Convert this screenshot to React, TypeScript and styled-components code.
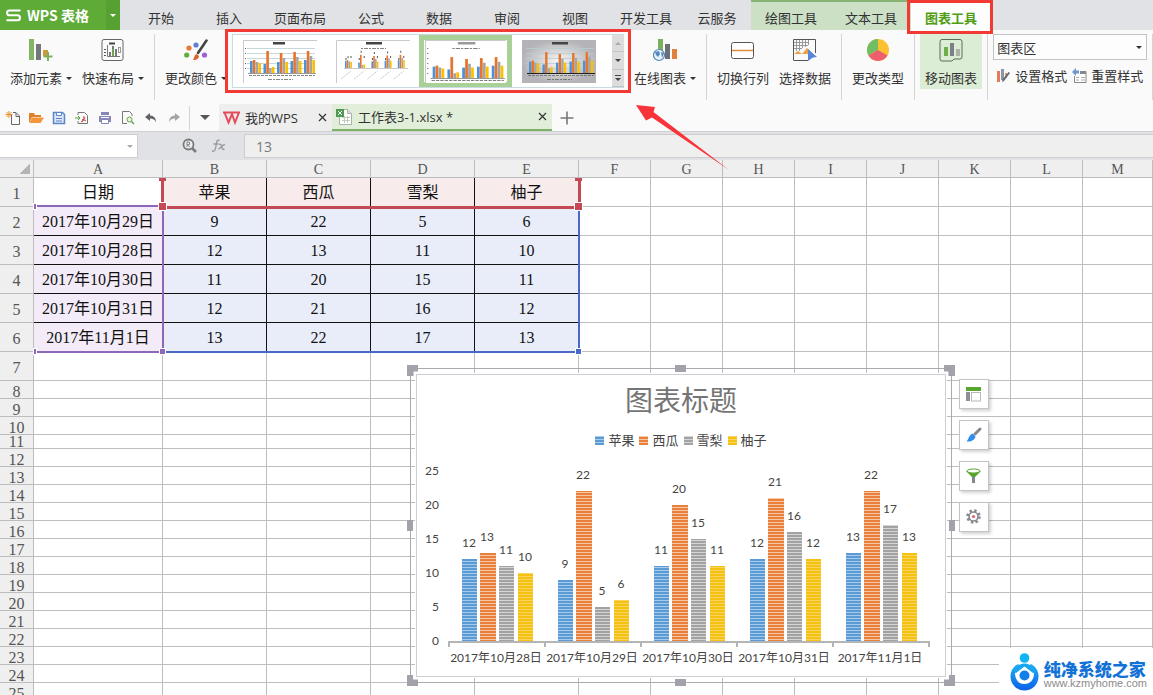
import React from "react";
import styled, { createGlobalStyle, css } from "styled-components";

const sans = `"Open Sans", "Noto Sans CJK SC", sans-serif`;
const ui = `"Noto Sans CJK SC", "Noto Sans", sans-serif`;
const serif = `"Liberation Serif", "Noto Sans CJK SC", serif`;
const calibri = `Lato, "Noto Sans CJK SC", sans-serif`;
const RED = "#f23a35";

const Global = createGlobalStyle`
  * { box-sizing: border-box; }
  body { margin: 0; background: #fff; font-family: ${ui}; font-size: 13px; color: #333; }
  button, input, select { font: inherit; color: inherit; margin: 0; padding: 0; border: 0; background: none; border-radius: 0; }
  button { cursor: pointer; }
  svg { display: block; }
`;

const Window = styled.div`
  position: relative;
  display: flex;
  flex-direction: column;
  height: 100vh;
  overflow: hidden;
`;

/* ---- tab strip ---- */
const TabStrip = styled.nav`
  display: flex;
  flex: none;
  height: 30px;
  background: #e1e2e5;
`;
const Brand = styled.button`
  && { background: #5fab38; color: #fff; }
  display: flex;
  align-items: center;
  width: 106px;
  && { padding-left: 6px; }
  gap: 6px;
  font-size: 14px;
  font-weight: 700;
  white-space: nowrap;
`;
const BrandMenu = styled.button`
  && { background: #57a132; color: #fff; margin-right: 7px; }
  display: flex;
  align-items: center;
  justify-content: center;
  width: 14px;
`;
const Tab = styled.button<{ $wide?: boolean; $context?: boolean; $active?: boolean }>`
  position: relative;
  flex: none;
  width: ${(p) => (p.$context ? 80 : p.$wide ? 74 : 68)}px;
  && { padding-top: 6px; }
  line-height: 18px;
  white-space: nowrap;
  ${(p) => p.$context && css`&& { background: #cbe0c4; border-top: 2px solid #88b574; padding-top: 4px; }`}
  ${(p) => p.$active && css`
    && { background: #fdfdfd; color: #4f9d12; }
    font-weight: 700;
    z-index: 2;
    &::after { content: ""; position: absolute; inset: -2px -2px -4px -4px; border: 3px solid ${RED}; }
  `}
`;

const Caret = styled.span<{ $size?: number; $up?: boolean }>`
  flex: none;
  width: 0;
  height: 0;
  border: ${(p) => p.$size ?? 3}px solid transparent;
  ${(p) => p.$up ? "border-bottom-color: currentColor; border-top-width: 0;" : "border-top-color: currentColor; border-bottom-width: 0;"}
`;

/* ---- ribbon ---- */
const Ribbon = styled.section`
  display: flex;
  flex: none;
  align-items: flex-start;
  gap: 10px;
  height: 74px;
  padding: 4px 0 0 10px;
  background: #fafafa;
`;
const Divider = styled.span`
  flex: none;
  width: 1px;
  height: 66px;
  background: #d4d4d4;
`;
const Tool = styled.button<{ $active?: boolean }>`
  display: flex;
  flex: none;
  flex-direction: column;
  align-items: center;
  height: 55px;
  && { padding-top: 5px; }
  gap: 6px;
  ${(p) => p.$active && css`&& { background: #dcedd5; padding: 5px 5px 0; margin: 0 -5px; }`}
`;
const ToolLabel = styled.span`
  display: flex;
  align-items: center;
  gap: 4px;
  line-height: 20px;
  white-space: nowrap;
`;
const Gallery = styled.div`
  position: relative;
  display: flex;
  flex: none;
  width: 392px;
  height: 54px;
  margin-left: -5px;
  background: #fff;
  border: 1px solid #c9dbe2;
  border-right: 0;
  z-index: 1;
  &::after { content: ""; position: absolute; inset: -6px -7px -6px -8px; border: 3px solid ${RED}; pointer-events: none; }
`;
const Thumb = styled.button<{ $selected?: boolean }>`
  display: flex;
  flex: none;
  align-items: center;
  justify-content: center;
  width: 93px;
  height: 52px;
  ${(p) => p.$selected && css`&& { border: 5px solid #a9d197; }`}
`;
const Scroller = styled.div`
  display: flex;
  flex-direction: column;
  width: 12px;
  margin-left: auto;
  background: #dcdcdc;
`;
const ScrollButton = styled.button<{ $muted?: boolean }>`
  display: flex;
  flex: 1;
  flex-direction: column;
  align-items: center;
  justify-content: center;
  gap: 2px;
  && { color: ${(p) => (p.$muted ? "#aaa" : "#444")}; border-bottom: 1px solid #c4c4c4; }
`;
const Bar = styled.span`
  width: 6px;
  height: 1px;
  background: currentColor;
`;
const FormatGroup = styled.div`
  display: flex;
  flex: none;
  flex-direction: column;
  gap: 6px;
  width: 154px;
  margin: 0 -5px;
`;
const SelectWrap = styled.label`
  display: flex;
  align-items: center;
  height: 26px;
  padding-right: 4px;
  background: #fdfdfd;
  border: 1px solid #c3c3c3;
`;
const Select = styled.select`
  appearance: none;
  flex: 1;
  && { padding-left: 3px; }
  outline: 0;
`;
const FormatRow = styled.div`
  display: flex;
  gap: 5px;
  padding-left: 3px;
`;
const SmallTool = styled.button`
  display: flex;
  align-items: center;
  gap: 4px;
  line-height: 20px;
  white-space: nowrap;
`;

/* ---- quick access and document tabs ---- */
const QuickBar = styled.section`
  display: flex;
  flex: none;
  height: 27px;
  background: #fafafa;
`;
const QuickIcons = styled.div`
  display: flex;
  align-items: center;
  gap: 7px;
  padding: 1px 7px 0 5px;
`;
const QuickSep = styled(Divider)`
  height: 24px;
  margin-top: 2px;
`;
const QuickMore = styled.button`
  display: flex;
  align-items: center;
  justify-content: center;
  width: 29px;
  && { color: #555; }
`;
const DocTab = styled.div<{ $current?: boolean }>`
  display: flex;
  align-items: center;
  width: ${(p) => (p.$current ? 220 : 113)}px;
  padding: 0 5px 0 4px;
  gap: 5px;
  font-family: ${sans};
  background: ${(p) => (p.$current ? "#e1eed9" : "#eeeeee")};
  ${(p) => p.$current && css`border-bottom: 2px solid #7cb268;`}
`;
const DocName = styled.a`
  flex: 1;
  color: #333;
  text-decoration: none;
  white-space: nowrap;
`;
const IconButton = styled.button`
  display: flex;
  align-items: center;
  justify-content: center;
`;
const AddTab = styled(IconButton)`
  width: 29px;
`;

/* ---- formula bar ---- */
const FormulaBar = styled.section`
  display: flex;
  flex: none;
  align-items: center;
  height: 29px;
  background: #e1e2e5;
  border-top: 1px solid #d0d0d2;
`;
const NameBox = styled.label`
  display: flex;
  align-items: center;
  width: 138px;
  height: 24px;
  padding-right: 4px;
  background: #fff;
  border: 1px solid #cfcfcf;
  border-left: 0;
  color: #aaa;
`;
const NameInput = styled.input`
  flex: 1;
  min-width: 0;
  outline: 0;
`;
const FormulaTools = styled.div`
  display: flex;
  align-items: center;
  justify-content: flex-end;
  gap: 14px;
  width: 106px;
  padding-right: 18px;
`;
const FormulaInput = styled.input`
  && { flex: 1; height: 24px; padding-left: 11px; background: #efefef; border: 1px solid #cdcdcd; border-right: 0; color: #777; }
  font-family: ${sans};
  font-size: 14px;
  outline: 0;
`;

/* ---- sheet ---- */
const Sheet = styled.main`
  position: relative;
  flex: 1;
  min-height: 0;
`;
const Grid = styled.table`
  width: 100%;
  table-layout: fixed;
  border-collapse: separate;
  border-spacing: 0;
  font-family: ${serif};
  font-size: 16px;
  line-height: 13px;
`;
const Col = styled.col<{ $w?: number }>`
  width: ${(p) => (p.$w ? `${p.$w}px` : "auto")};
`;
const Row = styled.tr<{ $h: number }>`
  height: ${(p) => p.$h}px;
`;
const ColHead = styled.th`
  padding: 2px 0 0;
  background: #efefef;
  border: solid #bdbdbd;
  border-width: 0 1px 1px 0;
  font-size: 14px;
  font-weight: 400;
  color: #555;
`;
const Corner = styled(ColHead)`
  background: linear-gradient(135deg, transparent 50%, #b4b4b4 50%) 20px 4px / 10px 10px no-repeat #efefef;
`;
const RowHead = styled.th<{ $short?: boolean }>`
  padding: ${(p) => (p.$short ? 0 : 3)}px 0 0;
  background: #efefef;
  border: solid #bdbdbd;
  border-width: 0 1px 1px 0;
  font-weight: 400;
  color: #555;
  vertical-align: middle;
`;
const fills = { none: "transparent", red: "#f8ebeb", purple: "#f3ecf8", blue: "#e9edfa" };
const Cell = styled.td<{ $fill?: keyof typeof fills; $right?: boolean; $bottom?: boolean }>`
  padding: 1px 0 0;
  text-align: center;
  white-space: nowrap;
  color: #111;
  background: ${(p) => fills[p.$fill ?? "none"]};
  border-style: solid;
  border-width: 0 1px 1px 0;
  border-color: transparent ${(p) => (p.$right ? "#111" : "#bdbdbd")} ${(p) => (p.$bottom ? "#111" : "#bdbdbd")} transparent;
`;
const RangeEdge = styled.span<{ $x: number; $y: number; $w: number; $h: number; $color: string }>`
  position: absolute;
  left: ${(p) => p.$x}px;
  top: ${(p) => p.$y}px;
  width: ${(p) => p.$w}px;
  height: ${(p) => p.$h}px;
  background: ${(p) => p.$color};
`;
const RangeHandle = styled(RangeEdge)`
  outline: 1px solid #fff;
`;

/* ---- chart object ---- */
const ChartObject = styled.section`
  position: absolute;
  left: 410px;
  top: 208px;
  width: 542px;
  height: 315px;
  padding: 5px;
  border: 1px solid #a9a9af;
`;
const ChartFrame = styled.div`
  display: flex;
  flex-direction: column;
  align-items: center;
  height: 303px;
  background: #fff;
  border: 1px solid #cfcfd3;
  outline: 1px solid #fff;
  font-family: ${calibri};
`;
const ChartTitle = styled.h2`
  margin: 5px 0 0;
  font-size: 28px;
  font-weight: 400;
  line-height: 40px;
  color: #757575;
`;
const Legend = styled.ul`
  display: flex;
  gap: 5px;
  margin: 10px 0 0;
  padding: 0;
  list-style: none;
  font-size: 13px;
  line-height: 20px;
  color: #444;
`;
const LegendItem = styled.li`
  display: flex;
  align-items: center;
  gap: 4px;
`;
const Handle = styled.span<{ $at: string }>`
  position: absolute;
  background: #a2a2aa;
  ${(p) => {
    const [v, h] = p.$at.split(" ");
    const corner = v !== "m" && h !== "m";
    const y = v === "t" ? "top: -4px;" : v === "b" ? "bottom: -4px;" : "top: 151px;";
    const x = h === "l" ? "left: -4px;" : h === "r" ? "right: -4px;" : "left: 264px;";
    const size = corner ? "width: 11px; height: 11px;" : v === "m" ? "width: 6px; height: 11px;" : "width: 11px; height: 7px;";
    const px = h === "l" ? [0, 55] : [45, 100];
    const clip = !corner ? "" :
      v === "t" && h === "l" ? "polygon(0 0,100% 0,100% 60%,60% 60%,60% 100%,0 100%)" :
      v === "t" ? "polygon(0 0,100% 0,100% 100%,40% 100%,40% 60%,0 60%)" :
      h === "l" ? `polygon(0 0,${px[1]}% 0,${px[1]}% 40%,100% 40%,100% 100%,0 100%)` :
      `polygon(${px[0]}% 0,100% 0,100% 100%,0 100%,0 40%,${px[0]}% 40%)`;
    return `${y}${x}${size}${clip ? `clip-path: ${clip};` : ""}`;
  }}
`;
const SideTools = styled.div`
  position: absolute;
  left: 100%;
  top: 10px;
  margin-left: 8px;
  display: flex;
  flex-direction: column;
  gap: 11px;
`;
const SideButton = styled.button`
  display: flex;
  align-items: center;
  justify-content: center;
  width: 30px;
  height: 30px;
  && { background: #fff; border: 1px solid #c4c4c8; }
  box-shadow: 2px 2px 3px rgba(0, 0, 0, 0.18);
`;

const Arrow = styled.svg`
  position: absolute;
  left: 636px;
  top: 104px;
  z-index: 3;
  pointer-events: none;
`;
const Watermark = styled.aside`
  position: absolute;
  right: 0;
  bottom: 0;
  display: flex;
  align-items: center;
  gap: 5px;
  height: 47px;
  padding: 0 6px 0 11px;
  background: #fff;
  border-top-left-radius: 14px;
`;
const MarkText = styled.div`
  padding-top: 5px;
`;
const MarkName = styled.div`
  font-size: 17px;
  font-weight: 900;
  line-height: 18px;
  color: #1272d6;
`;
const MarkUrl = styled.div`
  font-family: "Liberation Sans", sans-serif;
  font-size: 11px;
  line-height: 11px;
  color: #8c8c8c;
`;

/* ---- data ---- */
const series = [
  { name: "苹果", color: "#5b9bd5", light: "#a9cbea", values: [12, 9, 11, 12, 13] },
  { name: "西瓜", color: "#e8803c", light: "#f6c6a5", values: [13, 22, 20, 21, 22] },
  { name: "雪梨", color: "#a2a2a2", light: "#d5d5d5", values: [11, 5, 15, 16, 17] },
  { name: "柚子", color: "#f5c211", light: "#f9d560", values: [10, 6, 11, 12, 13] },
];
const days = ["2017年10月28日", "2017年10月29日", "2017年10月30日", "2017年10月31日", "2017年11月1日"];
const tableRows: (string | number)[][] = [
  ["日期", "苹果", "西瓜", "雪梨", "柚子"],
  ["2017年10月29日", 9, 22, 5, 6],
  ["2017年10月28日", 12, 13, 11, 10],
  ["2017年10月30日", 11, 20, 15, 11],
  ["2017年10月31日", 12, 21, 16, 12],
  ["2017年11月1日", 13, 22, 17, 13],
];
const columns = "ABCDEFGHIJKLM".split("");
const colWidths = [129, 104, 104, 104, 104, 72, 72, 72, 72, 72, 72, 72];
const rowHeight = (n: number) => (n <= 7 ? 29 : n === 11 ? 14 : 18);

const tabs: { name: string; wide?: boolean; context?: boolean; active?: boolean }[] = [
  { name: "开始" }, { name: "插入" }, { name: "页面布局", wide: true }, { name: "公式" },
  { name: "数据" }, { name: "审阅" }, { name: "视图" }, { name: "开发工具", wide: true }, { name: "云服务" },
  { name: "绘图工具", context: true }, { name: "文本工具", context: true }, { name: "图表工具", context: true, active: true },
];

/* ---- drawings ---- */
const Stripes = () => (
  <defs>
    {series.map((s, i) => (
      <pattern key={s.name} id={`stripe${i}`} width="4" height="3" patternUnits="userSpaceOnUse">
        <rect width="4" height="3" fill={s.color} />
        <rect width="4" height="1" fill={s.light} />
      </pattern>
    ))}
  </defs>
);

const barX = [13, 31, 50, 69];
const Plot = () => (
  <svg width="528" height="225" viewBox="0 0 528 225" fontFamily={calibri} fontSize="12" fill="#444" role="img" aria-label="图表标题">
    <Stripes />
    {[0, 5, 10, 15, 20, 25].map((v) => (
      <text key={v} x="22" y={195 - v * 6.8} textAnchor="end">{v}</text>
    ))}
    {days.map((d, c) => (
      <g key={d}>
        {series.map((s, i) => {
          const h = Math.round(s.values[c] * 6.8);
          const x = 32 + c * 96 + barX[i];
          return (
            <g key={s.name}>
              <rect x={x} y={191 - h} width={i === 1 ? 16 : 15} height={h} fill={`url(#stripe${i})`} />
              <text x={x + 7} y={179 - h} textAnchor="middle">{s.values[c]}</text>
            </g>
          );
        })}
        <text x={79 + c * 96} y="212" textAnchor="middle">{d}</text>
      </g>
    ))}
    <path d="M31 192H513 M32 191v6 M128 191v6 M224 191v6 M320 191v6 M416 191v6 M512 191v6" stroke="#b5b5b5" strokeWidth="2" fill="none" />
  </svg>
);

const Mini = ({ kind }: { kind: number }) => {
  const k = [1, 0.6, 0.95, 0.95][kind];
  const base = [33, 28, 38, 33][kind];
  const bw = [2.6, 1.6, 2.5, 2.4][kind];
  const ratio = kind === 1 ? 13.2 : 13.5;
  return (
    <svg width={kind === 2 ? 81 : 74} height="43" viewBox="0 0 74 43" preserveAspectRatio="none">
      <defs>
        <radialGradient id="shade"><stop offset="0" stopColor="#f8f8f8" /><stop offset="1" stopColor="#b4b4b8" /></radialGradient>
      </defs>
      <rect width="74" height="43" fill={kind === 3 ? "url(#shade)" : "#fff"} />
      {kind !== 3 && <path d="M74 .5H.5V43" fill="none" stroke="#c9c9cf" />}
      <rect x="30" y="2" width={kind === 0 ? 12 : 16} height="2.500" fill={kind === 2 ? "#999" : "#444"} />
      {(kind === 1 || kind === 2) && <path d="M25 8.500h25" stroke="#666" strokeWidth=".8" strokeDasharray="2 1 4 1" />}
      {(kind === 0 || kind === 3) && <path d="M4 8.500h68M4 13.500h68M4 18.500h68M4 23.500h68M4 28.500h68" stroke="#b7cdd2" strokeWidth=".8" />}
      {[0, 1, 2, 3, 4].map((c) => (
        <g key={c}>
          {series.map((s, i) => {
            const h = s.values[c] * k;
            return <rect key={i} x={(kind === 1 ? 9 : 7) + c * ratio + i * (bw + 0.2)} y={base - h} width={bw} height={h} fill={["#4b93d6", "#e8732a", "#a5a5a5", "#fcc000"][i]} />;
          })}
          {kind === 1 && <path d={`M${10 + c * 13.2} 20v-2M${12 + c * 13.2} ${26 - series[1].values[c] * 0.6}v-2M${15 + c * 13.2} 18v-2`} stroke="#555" />}
          {kind === 1 && <path d={`M${5 + c * 13.2} 39l10-8`} stroke="#aaa" strokeWidth=".7" strokeDasharray="2 1" />}
        </g>
      ))}
      {kind === 1 && <path d="M8 28.500h64" stroke="#bbb" strokeWidth=".8" />}
      {kind !== 1 && <path d={`M5 ${base + 0.5}h68`} stroke={kind === 3 ? "#222" : "#999"} />}
      {kind !== 1 && <path d={`M6 ${base + 2.5}h66`} stroke="#666" strokeWidth=".8" strokeDasharray="3 1" />}
      {kind !== 1 && kind !== 3 && <path d={`M2.500 8V${base}`} stroke="#666" strokeDasharray="1 4" />}
      {(kind === 0 || kind === 3) && <path d="M25 39.500h25" stroke="#666" strokeWidth=".8" strokeDasharray="4 1 2 1" />}
    </svg>
  );
};

const icons = {
  add: <><path d="M0 0h5v21H0z" fill="#83b567" /><path d="M7 5h5v16H7z" fill="#73767a" /><path d="M14 11h5v6h-5z" fill="#cf9a3a" /><path d="M19 13v9M14.500 17.500h9" stroke="#7fae5c" strokeWidth="2" /></>,
  layout: <><rect x="1" y=".5" width="21" height="21" rx="2" fill="none" stroke="#666" /><path d="M8 4.500h6" stroke="#444" strokeWidth="2" /><path d="M6.500 6v11.500H19" fill="none" stroke="#777" /><path d="M3 10.500h2M3 13.500h2M3 16.500h2" stroke="#555" /><path d="M8 13h2v4H8zM11 7h2v10h-2zM14 10h2v7h-2z" fill="#777" /><path d="M11 10h2v7h-2z" fill="#6da552" /><rect x="17.500" y="8.500" width="2" height="5" fill="none" stroke="#999" /></>,
  color: <><circle cx="5" cy="9" r="2.600" fill="#e27a33" /><circle cx="12" cy="6" r="2.600" fill="#5d7fd0" /><circle cx="2.700" cy="16" r="2.600" fill="#63ab3f" /><circle cx="20.500" cy="16" r="2.600" fill="#9863d8" /><path d="M22.500 1.500L14 14" stroke="#444" strokeWidth="2.600" strokeLinecap="round" /><path d="M12.500 15l2.500 2c0 3-3 4.500-6 4 1.500-2 1-5 3.500-6z" fill="#d9662a" /></>,
  online: <><path d="M5 0h5v12H5z" fill="#7bb05e" /><path d="M12 5h5v15h-5z" fill="#6c7075" /><path d="M19 10h5v10h-5z" fill="#e0813e" /><circle cx="6" cy="16" r="5.500" fill="#e8f1fa" stroke="#5588bd" strokeWidth="1.200" /><path d="M2 13l4-1 1 3-2 3-2-2zM8 13l3 1-2 5z" fill="#5588bd" /></>,
  swap: <><rect x=".5" y="3.500" width="22" height="16" rx="2" fill="#fff" stroke="#555" /><path d="M1 11.500h21" stroke="#e28b3e" strokeWidth="1.500" /></>,
  data: <><path d="M.5 21V.5h22V14M.5 21.500H15" fill="none" stroke="#555" /><path d="M1 3.500h14M1 6.500h14M1 9.500h8M3.500 1v11M6.500 1v11M9.500 1v8M12.500 1v7M15.500 1v5" stroke="#999" /><path d="M1 20v-5l4-3 4 3 5-6 3 3v3l-2 1v-1H1z" fill="#eda044" /><path d="M15 10l9 8-4 .5-5 3.500z" fill="#5a86da" /></>,
  pie: <><circle cx="12" cy="11" r="11" fill="#fcc12f" /><path d="M12 11L2.500 16.500A11 11 0 0 1 12 0z" fill="#71bd62" /><path d="M12 11l9.500 5.500a11 11 0 0 1-19 0z" fill="#ee5f6d" /></>,
  move: <><path d="M3 .5h18a2 2 0 0 1 2 2V18a2 2 0 0 1-2 2h-6l-2 2H3a2 2 0 0 1-2-2V2.500a2 2 0 0 1 2-2z" fill="none" stroke="#5d6b58" /><path d="M5 8h4v9H5z" fill="#6fae4d" /><path d="M11 4h4v13h-4z" fill="#7d8187" /><path d="M17 10h4v7h-4z" fill="#a9b3a7" /></>,
};
const labelled = (icon: React.ReactNode, label: string, o: { caret?: boolean; active?: boolean } = {}) => (
  <Tool $active={o.active}>
    <svg width="24" height="23" viewBox="0 0 24 23" aria-hidden>{icon}</svg>
    <ToolLabel>{label}{o.caret && <Caret />}</ToolLabel>
  </Tool>
);

const quick: [string, React.ReactNode][] = [
  ["新建", <><path d="M6.500 5v9.500h8V6l-3.500-3.500H8M11 3v3.500h3.500" fill="none" stroke="#666" /><path d="M4 1v7M.5 4.500h7M1.500 2l5 5M6.500 2l-5 5" stroke="#eb9432" /></>],
  ["打开", <><path d="M1 13V3h5l1 2h6v2H4z" fill="#e0812a" /><path d="M4 7.500h12L12.500 13H1.500z" fill="#f3953b" /></>],
  ["保存", <><path d="M2.500 2.500h9l2 2v9h-11z" fill="#dbe7f8" stroke="#5b87ca" strokeWidth="1.500" /><path d="M5.500 2.500h5v3h-5z" fill="#fff" stroke="#5b87ca" /><path d="M5 8.500h6M5 11h6" stroke="#5b87ca" /></>],
  ["输出为PDF", <><path d="M4 5V2.500h6.500l3 3v8H4V11" fill="none" stroke="#777" /><path d="M1 8h5M4 6l2 2-2 2" fill="none" stroke="#53a047" /><path d="M7 12c3-1 3-3 2.500-5 0-1 2 0 1 1.500-1 1-2 2-2.500 3.500M8 9.500l4 1" fill="none" stroke="#c94a4a" /></>],
  ["打印", <><path d="M4 2h8v3H4zM2 6h12v6H2z" fill="#8487b8" /><path d="M4.500 9.500h7v4h-7z" fill="#fff" stroke="#8487b8" /><path d="M4 7.500h8" stroke="#fff" /></>],
  ["打印预览", <><path d="M7 13.500H2.500v-12h7l2.500 2.500V6" fill="none" stroke="#777" /><circle cx="9.500" cy="9.500" r="2.500" fill="#e6f3df" stroke="#65a34f" /><path d="M11.500 11.500L14 14" stroke="#65a34f" strokeWidth="1.500" /></>],
  ["撤销", <path d="M7 3L2 7l5 4V8.500c3 0 5 1 6 4 0-4-2-7-6-7z" fill="#606266" />],
  ["恢复", <path d="M9 3l5 4-5 4V8.500c-3 0-5 1-6 4 0-4 2-7 6-7z" fill="#a2a4a8" />],
];

const Close = () => <svg width="9" height="9" viewBox="0 0 9 9"><path d="M1 1l7 7M8 1L1 8" stroke="#333" strokeWidth="1.200" /></svg>;

const sideIcons: [string, React.ReactNode][] = [
  ["图表元素", <><path d="M0 1h15v4H0z" fill="#5aa52e" /><path d="M0 6h4v9H0z" fill="#8e9096" /><rect x="5.500" y="6.500" width="9" height="8.500" fill="#fff" stroke="#b9b9bd" /></>],
  ["图表样式", <><path d="M14 2L9 7" stroke="#85888e" strokeWidth="3" strokeLinecap="round" /><path d="M6.500 6.500l3 3c-1 4-5 5.500-9 5C3 12 2.500 8.500 6.500 6.500z" fill="#2f8cf0" /></>],
  ["图表筛选", <><path d="M0 3l6 6v5l3 1V9l6-6z" fill="#57a52d" /><path d="M6 9h3v6H6z" fill="#85888e" /><ellipse cx="7.500" cy="3" rx="6.500" ry="2" fill="#fff" stroke="#57a52d" /></>],
  ["设置", <><circle cx="7.500" cy="7.500" r="6" fill="none" stroke="#85888e" strokeWidth="2.500" strokeDasharray="2.400 2.310" /><circle cx="7.500" cy="7.500" r="4.500" fill="#fff" stroke="#85888e" strokeWidth="1.600" /><circle cx="7.500" cy="7.500" r="1.600" fill="#e06a68" /></>],
];

const cellProps = (row: number, col: number) => {
  if (row > 6 || col > 4) return {};
  const fill = col === 0 ? (row === 1 ? "none" : "purple") : row === 1 ? "red" : "blue";
  return { $fill: fill as keyof typeof fills, $right: col > 0 && col < 4, $bottom: row > 1 && row < 6 };
};

const CR = "#c34a55", CP = "#8c68ba", CB = "#4a68c8";

export default function App() {
  return (
    <Window>
      <Global />
      <TabStrip>
        <Brand>
          <svg width="15" height="13" viewBox="0 0 15 13"><path d="M14.500 1.500H3.500a2.300 2.300 0 0 0 0 4.800h8a2.500 2.500 0 0 1 0 5H.5" fill="none" stroke="#fff" strokeWidth="2" /></svg>
          WPS 表格
        </Brand>
        <BrandMenu aria-label="菜单"><Caret /></BrandMenu>
        {tabs.map((t) => <Tab key={t.name} $wide={t.wide} $context={t.context} $active={t.active}>{t.name}</Tab>)}
      </TabStrip>

      <Ribbon>
        {labelled(icons.add, "添加元素", { caret: true })}
        {labelled(icons.layout, "快速布局", { caret: true })}
        <Divider />
        {labelled(icons.color, "更改颜色", { caret: true })}
        <Gallery>
          {[0, 1, 2, 3].map((k) => (
            <Thumb key={k} $selected={k === 2} aria-label={`样式 ${k + 1}`}><Mini kind={k} /></Thumb>
          ))}
          <Scroller>
            <ScrollButton $muted aria-label="上一行"><Caret $up /></ScrollButton>
            <ScrollButton aria-label="下一行"><Caret /></ScrollButton>
            <ScrollButton aria-label="更多"><Bar /><Caret /></ScrollButton>
          </Scroller>
        </Gallery>
        {labelled(icons.online, "在线图表", { caret: true })}
        <Divider />
        {labelled(icons.swap, "切换行列")}
        {labelled(icons.data, "选择数据")}
        <Divider />
        {labelled(icons.pie, "更改类型")}
        <Divider />
        {labelled(icons.move, "移动图表", { active: true })}
        <Divider />
        <FormatGroup>
          <SelectWrap>
            <Select aria-label="图表元素" defaultValue="图表区"><option>图表区</option></Select>
            <Caret />
          </SelectWrap>
          <FormatRow>
            <SmallTool>
              <svg width="15" height="16" viewBox="0 0 15 16"><path d="M1 3h3v11H1z" fill="#e27b56" /><path d="M5 1h3v11H5z" fill="#8a95ab" /><path d="M9 5h2v5H9z" fill="#e09a55" /><path d="M14 5l-6 8-2 1 .5-2.500L12.500 4z" fill="#667" /></svg>
              设置格式
            </SmallTool>
            <SmallTool>
              <svg width="15" height="16" viewBox="0 0 15 16"><path d="M2.500 8v6.500h11.500V3.500H8" fill="#fff" stroke="#888" /><path d="M8 3h6v3H8z" fill="#888" /><path d="M4 9.500h3M9 9.500h4M4 12h3M9 12h4" stroke="#aaa" /><path d="M0 4l4-4v2.500h3v3H4V8z" fill="#6d97cf" /></svg>
              重置样式
            </SmallTool>
          </FormatRow>
        </FormatGroup>
        <Divider />
      </Ribbon>

      <QuickBar>
        <QuickIcons>
          {quick.map(([name, art]) => (
            <IconButton key={name} aria-label={name}><svg width="16" height="16" viewBox="0 0 16 16">{art}</svg></IconButton>
          ))}
        </QuickIcons>
        <QuickSep />
        <QuickMore aria-label="更多命令"><Caret $size={5} /></QuickMore>
        <DocTab>
          <svg width="17" height="14" viewBox="0 0 17 14"><path d="M0 1.500h12.500M1.500 1.500l4 10 3.500-8.500 3 8.500 4-10M7 1.500h10" fill="none" stroke="#e64b5b" strokeWidth="2" /></svg>
          <DocName href="#wps">我的WPS</DocName>
          <IconButton aria-label="关闭"><Close /></IconButton>
        </DocTab>
        <DocTab $current>
          <svg width="17" height="18" viewBox="0 0 17 18"><path d="M3.500 1.500h8l4 4v11h-12z" fill="#fff" stroke="#aab2a8" /><path d="M6 9.500h8M6 12.500h8M8.500 8v7M11.500 8v7" stroke="#c2cdc0" /><path d="M11.500 1.500v4h4" fill="#ddd" stroke="#aab2a8" /><path d="M0 1h8v8H0z" fill="#4e9a50" /><path d="M2 3l4 4M6 3L2 7" stroke="#fff" /></svg>
          <DocName href="#sheet">工作表3-1.xlsx *</DocName>
          <IconButton aria-label="关闭"><Close /></IconButton>
        </DocTab>
        <AddTab aria-label="新建标签"><svg width="14" height="14" viewBox="0 0 14 14"><path d="M7 .5v13M.5 7h13" stroke="#777" strokeWidth="1.600" /></svg></AddTab>
      </QuickBar>

      <FormulaBar>
        <NameBox><NameInput aria-label="名称框" /><Caret /></NameBox>
        <FormulaTools>
          <IconButton aria-label="查找"><svg width="15" height="16" viewBox="0 0 15 16"><circle cx="6.500" cy="6.500" r="5" fill="#eee" stroke="#77797d" strokeWidth="1.800" /><path d="M10 10l4 4" stroke="#77797d" strokeWidth="2.500" /><path d="M5 9V4h2.500v2.500H5l3 2.500" fill="none" stroke="#888" /></svg></IconButton>
          <IconButton aria-label="插入函数"><svg width="15" height="16" viewBox="0 0 15 16"><path d="M8.500 2.500C5.500 1 5.500 5 5 8s-1 6-4 5M2.500 6h5M8 6.500c2-1 2.500 1 3 3s1 2.500 2.500 1.500M14 6.500c-2-.5-4 4-6.500 4.500" fill="none" stroke="#9a9ca0" strokeWidth="1.400" /></svg></IconButton>
        </FormulaTools>
        <FormulaInput aria-label="编辑栏" defaultValue="13" />
      </FormulaBar>

      <Sheet>
        <Grid>
          <colgroup>
            <Col $w={34} />
            {columns.map((c, i) => <Col key={c} $w={colWidths[i]} />)}
          </colgroup>
          <thead>
            <Row $h={18}><Corner aria-label="全选" />{columns.map((c) => <ColHead key={c}>{c}</ColHead>)}</Row>
          </thead>
          <tbody>
            {Array.from({ length: 25 }, (_, i) => i + 1).map((n) => (
              <Row key={n} $h={rowHeight(n)}>
                <RowHead $short={rowHeight(n) < 18}>{n}</RowHead>
                {columns.map((c, i) => <Cell key={c} {...cellProps(n, i)}>{tableRows[n - 1]?.[i]}</Cell>)}
              </Row>
            ))}
          </tbody>
        </Grid>

        <RangeEdge $x={34} $y={45} $w={128} $h={2} $color={CP} />
        <RangeEdge $x={162} $y={50} $w={2} $h={142} $color={CP} />
        <RangeEdge $x={34} $y={191} $w={128} $h={2} $color={CP} />
        <RangeEdge $x={163} $y={191} $w={415} $h={2} $color={CB} />
        <RangeEdge $x={578} $y={50} $w={2} $h={142} $color={CB} />
        <RangeEdge $x={161} $y={19} $w={3} $h={26} $color={CR} />
        <RangeEdge $x={578} $y={19} $w={3} $h={26} $color={CR} />
        <RangeEdge $x={163} $y={46} $w={415} $h={3} $color={CR} />
        <RangeEdge $x={159} $y={18} $w={7} $h={3} $color={CR} />
        <RangeEdge $x={575} $y={18} $w={7} $h={3} $color={CR} />
        <RangeHandle $x={159} $y={43} $w={7} $h={7} $color={CR} />
        <RangeHandle $x={575} $y={43} $w={7} $h={7} $color={CR} />
        <RangeHandle $x={34} $y={44} $w={2} $h={5} $color={CP} />
        <RangeHandle $x={34} $y={189} $w={2} $h={5} $color={CP} />
        <RangeHandle $x={160} $y={189} $w={5} $h={5} $color={CP} />
        <RangeHandle $x={576} $y={189} $w={5} $h={5} $color={CB} />

        <ChartObject>
          <ChartFrame>
            <ChartTitle>图表标题</ChartTitle>
            <Legend>
              {series.map((s, i) => (
                <LegendItem key={s.name}>
                  <svg width="9" height="9"><rect width="9" height="9" fill={`url(#stripe${i})`} /></svg>
                  {s.name}
                </LegendItem>
              ))}
            </Legend>
            <Plot />
          </ChartFrame>
          {["t l", "t m", "t r", "m l", "m r", "b l", "b m", "b r"].map((h) => <Handle key={h} $at={h} />)}
          <SideTools>
            {sideIcons.map(([name, art]) => (
              <SideButton key={name} aria-label={name}><svg width="16" height="16" viewBox="0 0 16 16">{art}</svg></SideButton>
            ))}
          </SideTools>
        </ChartObject>
      </Sheet>

      <Arrow width="94" height="67" viewBox="0 0 94 67" aria-hidden>
        <path d="M0 1l19 2-1.500 5L93 66 16 13.500 10 16.500z" fill="#f8343a" />
      </Arrow>

      <Watermark>
        <svg width="29" height="38" viewBox="0 0 29 38" aria-hidden>
          <defs><linearGradient id="drop" x1="0" y1="0" x2="0" y2="1"><stop offset="0" stopColor="#22b5f5" /><stop offset="1" stopColor="#0a62e8" /></linearGradient></defs>
          <circle cx="14.500" cy="23.500" r="14" fill="url(#drop)" />
          <path d="M0 8h29v4c-5-3-8-2.500-9 0h-11c-1-2.500-4-3-9 0z" fill="#fff" />
          <path d="M14.500 13L5 20c0 7 4 11 9.500 11S24 27 24 20z" fill="#fff" />
          <path d="M3 17l7-5.500c3-1.500 6-1.500 9 0l7 5.500-3 3-8.500-6.500L6 20z" fill="#18a6f0" />
          <circle cx="14.500" cy="22.500" r="5" fill="#1380ea" />
          <circle cx="14.500" cy="5" r="4.800" fill="#12b4f4" />
        </svg>
        <MarkText>
          <MarkName>纯净系统之家</MarkName>
          <MarkUrl>www.kzmyhome.com</MarkUrl>
        </MarkText>
      </Watermark>
    </Window>
  );
}
